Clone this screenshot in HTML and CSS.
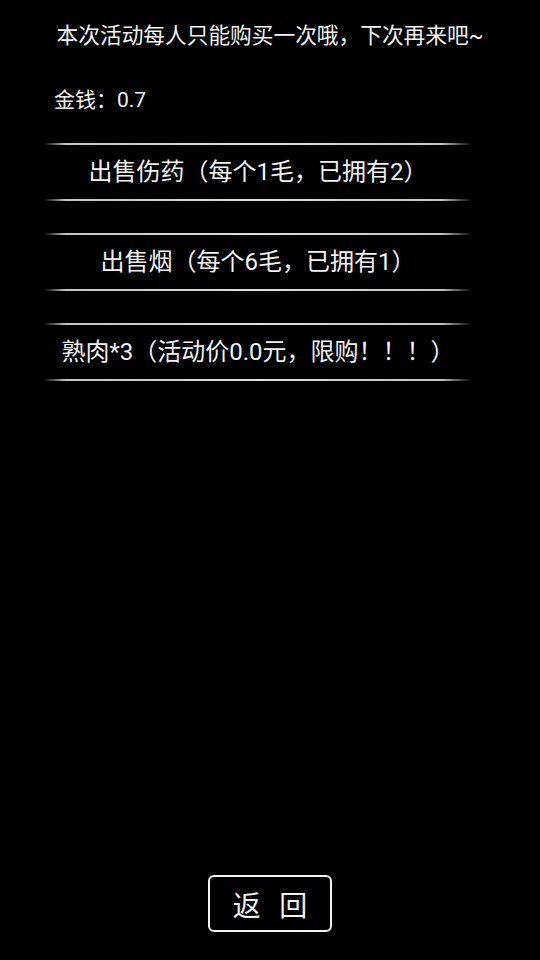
FILE: index.html
```html
<!DOCTYPE html>
<html>
<head>
    <meta charset="utf-8">
    <title>商店</title>
    <link rel="stylesheet" href="styles.css">
</head>
<body>
    <div class="shop">
        <div class="notice">本次活动每人只能购买一次哦，下次再来吧~</div>
        <div class="money">金钱：0.7</div>
        <div class="items">
            <div class="item">出售伤药（每个1毛，已拥有2）</div>
            <div class="item">出售烟（每个6毛，已拥有1）</div>
            <div class="item">熟肉*3（活动价0.0元，限购！！！）</div>
        </div>
        <button class="back">返 回</button>
    </div>
</body>
</html>
```
FILE: styles.css
```css
html, body {
    margin: 0;
    background: black;
}
body {
    color: #f2f2f2;
    font-family: Roboto, "Noto Sans CJK SC", sans-serif;
}
.shop {
    height: 960px;
    display: flex;
    flex-direction: column;
    box-sizing: border-box;
    padding: 22px 0 28px;
}
.notice {
    font-size: 21.7px;
    line-height: 28px;
    text-align: center;
}
.money {
    font-size: 21px;
    line-height: 28px;
    margin: 36px 0 0 54px;
}
.items {
    display: flex;
    flex-direction: column;
    gap: 32px;
    margin: 29px 0 0 44px;
    width: 428px;
}
.item {
    position: relative;
    height: 58px;
    box-sizing: border-box;
    padding-bottom: 5px;
    display: flex;
    align-items: center;
    justify-content: center;
    font-size: 24px;
}
/* glowing rules above and below each row */
.item::before,
.item::after {
    content: "";
    position: absolute;
    left: 0;
    right: 0;
    height: 2px;
    background: linear-gradient(to right, rgba(200,200,200,0) 0%, #c4c4c4 5%, #dedede 50%, #c4c4c4 93%, rgba(200,200,200,0) 100%);
}
.item::before { top: 0; }
.item::after { bottom: 0; }
.back {
    margin-top: auto;
    align-self: center;
    width: 124px;
    height: 57px;
    background: black;
    color: #f2f2f2;
    border: 2px solid #f2f2f2;
    border-radius: 6px;
    font-family: "Noto Sans CJK SC", sans-serif;
    font-size: 28px;
    letter-spacing: 6px;
    padding: 0 0 0 6px;
}
```
